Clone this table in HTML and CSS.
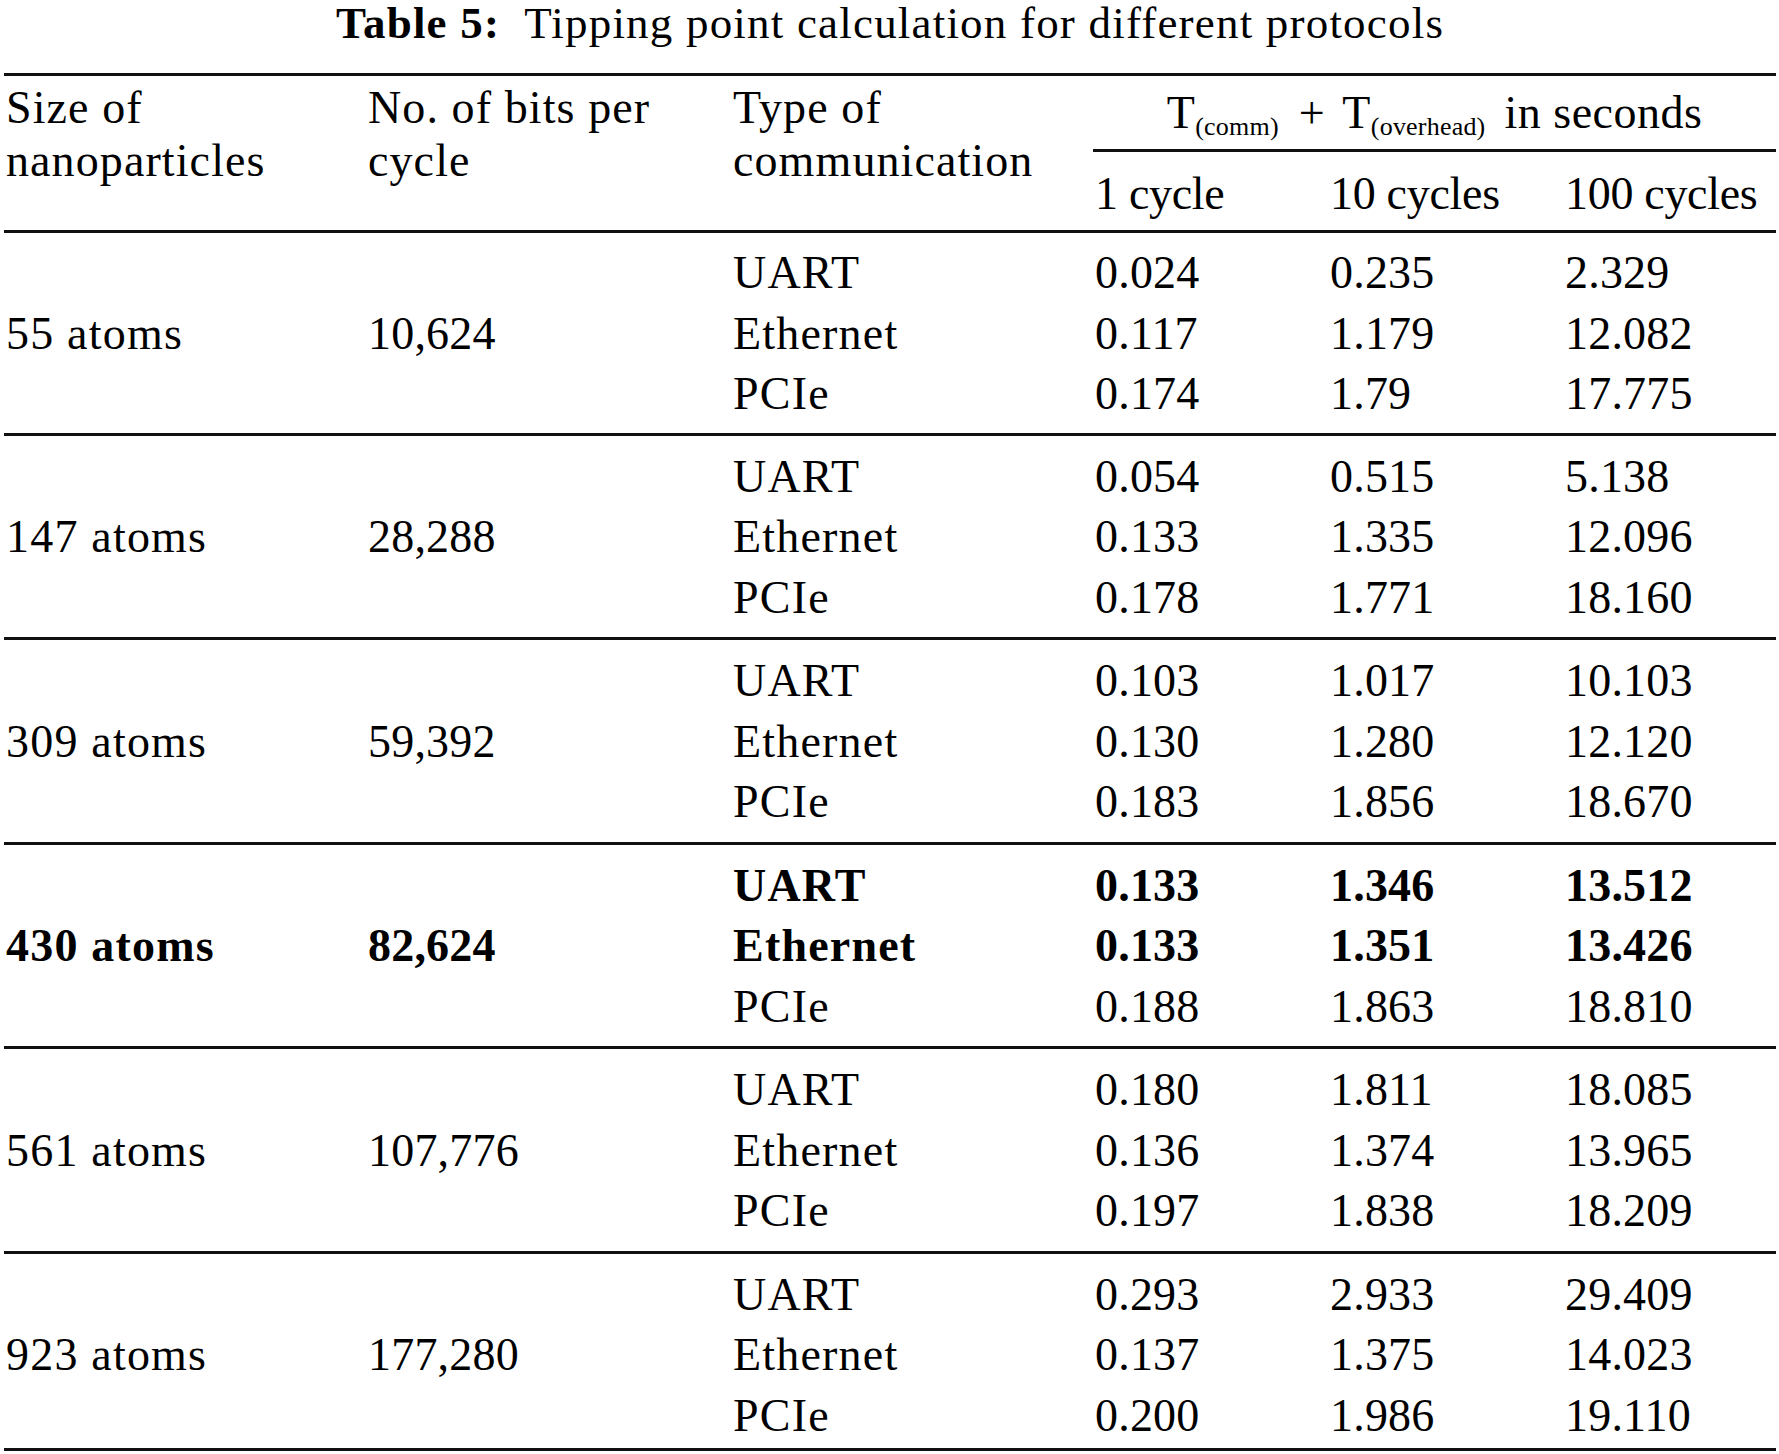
FILE: index.html
```html
<!DOCTYPE html>
<html>
<head>
<meta charset="utf-8">
<link rel="stylesheet" href="styles.css">
</head>
<body>
<div class="wrap">
  <div class="caption"><b>Table 5:</b>&nbsp; Tipping point calculation for different protocols</div>
  <table class="tbl">
    <colgroup>
      <col class="w1"><col class="w2"><col class="w3"><col class="w4"><col class="w5"><col class="w6">
    </colgroup>
    <thead>
      <tr>
        <th class="hl" rowspan="2">Size of<br>nanoparticles</th>
        <th class="hl" rowspan="2">No. of bits per<br>cycle</th>
        <th class="hl" rowspan="2">Type of<br>communication</th>
        <th class="hspan" colspan="3">T<sub>(comm)</sub><span class="op">+</span>T<sub>(overhead)</sub> in seconds</th>
      </tr>
      <tr>
        <th class="hsub">1 cycle</th>
        <th class="hsub">10 cycles</th>
        <th class="hsub">100 cycles</th>
      </tr>
    </thead>
    <tbody>
      <tr class="grp first">
        <td class="mid txt">55 atoms</td><td class="mid">10,624</td>
        <td class="txt"><div>UART</div><div>Ethernet</div><div>PCIe</div></td>
        <td><div>0.024</div><div>0.117</div><div>0.174</div></td>
        <td><div>0.235</div><div>1.179</div><div>1.79</div></td>
        <td><div>2.329</div><div>12.082</div><div>17.775</div></td>
      </tr>
      <tr class="grp">
        <td class="mid txt">147 atoms</td><td class="mid">28,288</td>
        <td class="txt"><div>UART</div><div>Ethernet</div><div>PCIe</div></td>
        <td><div>0.054</div><div>0.133</div><div>0.178</div></td>
        <td><div>0.515</div><div>1.335</div><div>1.771</div></td>
        <td><div>5.138</div><div>12.096</div><div>18.160</div></td>
      </tr>
      <tr class="grp">
        <td class="mid txt">309 atoms</td><td class="mid">59,392</td>
        <td class="txt"><div>UART</div><div>Ethernet</div><div>PCIe</div></td>
        <td><div>0.103</div><div>0.130</div><div>0.183</div></td>
        <td><div>1.017</div><div>1.280</div><div>1.856</div></td>
        <td><div>10.103</div><div>12.120</div><div>18.670</div></td>
      </tr>
      <tr class="grp">
        <td class="mid txt strong">430 atoms</td><td class="mid strong">82,624</td>
        <td class="txt"><div class="strong">UART</div><div class="strong">Ethernet</div><div>PCIe</div></td>
        <td><div class="strong">0.133</div><div class="strong">0.133</div><div>0.188</div></td>
        <td><div class="strong">1.346</div><div class="strong">1.351</div><div>1.863</div></td>
        <td><div class="strong">13.512</div><div class="strong">13.426</div><div>18.810</div></td>
      </tr>
      <tr class="grp">
        <td class="mid txt">561 atoms</td><td class="mid">107,776</td>
        <td class="txt"><div>UART</div><div>Ethernet</div><div>PCIe</div></td>
        <td><div>0.180</div><div>0.136</div><div>0.197</div></td>
        <td><div>1.811</div><div>1.374</div><div>1.838</div></td>
        <td><div>18.085</div><div>13.965</div><div>18.209</div></td>
      </tr>
      <tr class="grp last">
        <td class="mid txt">923 atoms</td><td class="mid">177,280</td>
        <td class="txt"><div>UART</div><div>Ethernet</div><div>PCIe</div></td>
        <td><div>0.293</div><div>0.137</div><div>0.200</div></td>
        <td><div>2.933</div><div>1.375</div><div>1.986</div></td>
        <td><div>29.409</div><div>14.023</div><div>19.110</div></td>
      </tr>
    </tbody>
  </table>
</div>
</body>
</html>
```
FILE: styles.css
```css
html, body {
  margin: 0;
  padding: 0;
  background: #fff;
}
body {
  font-family: "Liberation Serif", "Times New Roman", serif;
  color: #000;
}
.wrap {
  width: 1772px;
  margin-left: 4px;
}
.caption {
  text-align: center;
  font-size: 45px;
  letter-spacing: 1.2px;
  line-height: 46px;
  height: 73px;
}
.tbl {
  width: 1772px;
  border-collapse: collapse;
  font-size: 46px;
  table-layout: fixed;
  letter-spacing: 0.2px;
}
.w1 { width: 362px; }
.w2 { width: 365px; }
.w3 { width: 362px; }
.w4 { width: 235px; }
.w5 { width: 235px; }
.w6 { width: 213px; }
.tbl th {
  font-weight: normal;
  text-align: left;
  padding: 0 0 0 2px;
  line-height: 53px;
}
.tbl thead tr:first-child th {
  border-top: 3px solid #111;
}
.tbl .hl {
  vertical-align: top;
  padding-top: 5px;
  border-bottom: 3px solid #111;
  letter-spacing: 1.1px;
}
.tbl .hspan {
  text-align: center;
  padding: 10px 0 10px 0;
  border-bottom: 3px solid #111;
  letter-spacing: 0.5px;
}
.hspan sub {
  font-size: 26px;
  vertical-align: -7px;
  line-height: 0;
  letter-spacing: 0.2px;
  margin-right: 7px;
}
.hspan .op {
  margin: 0 17px 0 13px;
}
.tbl .hsub {
  padding-top: 15px;
  padding-bottom: 10px;
  border-bottom: 3px solid #111;
  letter-spacing: -0.3px;
}
.tbl td {
  padding: 11px 0 9px 2px;
  vertical-align: top;
  line-height: 60.5px;
  white-space: nowrap;
}
.tbl td.txt {
  letter-spacing: 1.2px;
}
.tbl td.mid {
  vertical-align: middle;
}
.tbl .first td {
  padding-top: 10px;
  padding-bottom: 8px;
}
.tbl .last td {
  padding-bottom: 2px;
}
.grp {
  border-bottom: 3px solid #111;
}
.strong {
  font-weight: bold;
}
```
